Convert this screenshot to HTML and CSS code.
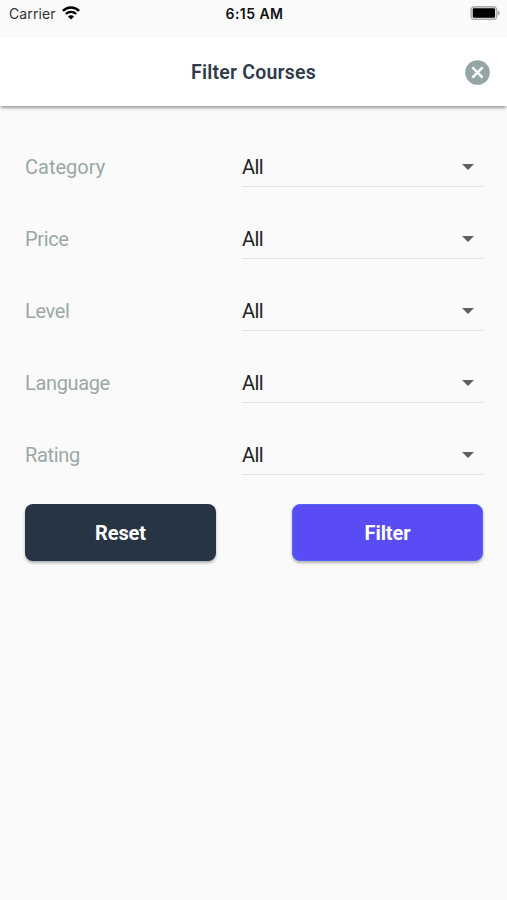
FILE: index.html
```html
<!DOCTYPE html>
<html lang="en">
<head>
    <meta charset="UTF-8">
    <meta name="viewport" content="width=device-width, initial-scale=1.0">
    <title>Filter Courses</title>
    <link rel="stylesheet" href="styles.css">
</head>
<body>
    <div class="status-bar">
        <div class="status-left">
            <span class="carrier">Carrier</span>
            <svg class="wifi" width="18" height="14" viewBox="0 0 18 14">
                <path d="M0.9 4.9C5.4 0.3 12.6 0.3 17.1 4.9" fill="none" stroke="#000" stroke-width="2.5"/>
                <path d="M3.8 8C6.7 5.2 11.3 5.2 14.2 8" fill="none" stroke="#000" stroke-width="2.3"/>
                <path d="M9 13.6L5.9 10.4C7.6 8.9 10.4 8.9 12.1 10.4Z"/>
            </svg>
        </div>
        <span class="time">6:15 AM</span>
        <svg class="battery" width="30" height="14" viewBox="0 0 30 14">
            <rect x="1" y="0.7" width="25.8" height="12.8" rx="3.6" fill="#ddd" stroke="#aaa" stroke-width="1.4"/>
            <rect x="2.8" y="2.2" width="22.2" height="9.6" rx="1.4"/>
            <path d="M27.8 4.5C30.4 5.6 30.4 8.4 27.8 9.5Z" fill="#aaa"/>
        </svg>
    </div>

    <header class="header">
        <h1>Filter Courses</h1>
        <button class="close" aria-label="Close">
            <svg width="25" height="25" viewBox="0 0 25 25">
                <circle cx="12.5" cy="12.5" r="12.3" fill="#95a5a6"/>
                <path d="M7.4 7.4L17.6 17.6M17.6 7.4L7.4 17.6" stroke="#fff" stroke-width="2.5"/>
            </svg>
        </button>
    </header>

    <main class="filters">
        <div class="row">
            <label for="category">Category</label>
            <div class="select">
                <select id="category"><option>All</option></select>
                <svg class="arrow" width="12" height="6" viewBox="0 0 12 6"><path d="M0 0H12L6 6Z"/></svg>
            </div>
        </div>
        <div class="row">
            <label for="price">Price</label>
            <div class="select">
                <select id="price"><option>All</option></select>
                <svg class="arrow" width="12" height="6" viewBox="0 0 12 6"><path d="M0 0H12L6 6Z"/></svg>
            </div>
        </div>
        <div class="row">
            <label for="level">Level</label>
            <div class="select">
                <select id="level"><option>All</option></select>
                <svg class="arrow" width="12" height="6" viewBox="0 0 12 6"><path d="M0 0H12L6 6Z"/></svg>
            </div>
        </div>
        <div class="row">
            <label for="language">Language</label>
            <div class="select">
                <select id="language"><option>All</option></select>
                <svg class="arrow" width="12" height="6" viewBox="0 0 12 6"><path d="M0 0H12L6 6Z"/></svg>
            </div>
        </div>
        <div class="row">
            <label for="rating">Rating</label>
            <div class="select">
                <select id="rating"><option>All</option></select>
                <svg class="arrow" width="12" height="6" viewBox="0 0 12 6"><path d="M0 0H12L6 6Z"/></svg>
            </div>
        </div>

        <div class="buttons">
            <button class="btn btn-reset">Reset</button>
            <button class="btn btn-filter">Filter</button>
        </div>
    </main>
</body>
</html>
```

FILE: styles.css
```css
* {
    box-sizing: border-box;
}

body {
    margin: 0;
    min-height: 100vh;
    background: #fafafa;
    font-family: Roboto, "Liberation Sans", sans-serif;
    font-size: 20px;
}

button {
    border: none;
    padding: 0;
    font-family: inherit;
    cursor: pointer;
}

/* Status bar */
.status-bar {
    display: grid;
    grid-template-columns: 1fr auto 1fr;
    align-items: center;
    height: 38px;
    padding: 0 7px 12px 9px;
    font-family: Inter, "Liberation Sans", sans-serif;
    font-size: 14px;
    color: #111;
}

.status-left {
    display: flex;
    align-items: center;
    gap: 6px;
}

.carrier {
    color: #333;
    letter-spacing: 0.1px;
}

.time {
    font-weight: 600;
    letter-spacing: 0.45px;
}

.battery {
    justify-self: end;
}

/* Header */
.header {
    display: grid;
    grid-template-columns: 1fr auto 1fr;
    align-items: center;
    height: 68px;
    padding: 0 17px;
    background: #fff;
    box-shadow: 0 3px 3px -1px rgba(0, 0, 0, 0.38);
}

.header h1 {
    grid-column: 2;
    margin: 0;
    font-size: 19.5px;
    font-weight: 600;
    letter-spacing: 0.2px;
    color: #2f3a4b;
}

.close {
    display: flex;
    justify-self: end;
    background: none;
}

/* Filters */
.filters {
    padding: 25px 24px 0 25px;
}

.row {
    display: grid;
    grid-template-columns: 217px 1fr;
    height: 72px;
    padding-top: 16px;
}

.row label {
    line-height: 40px;
    letter-spacing: -0.35px;
    color: #9aa8a7;
}

.row label[for="category"] {
    letter-spacing: 0;
}

.select {
    display: flex;
    align-items: center;
    height: 40px;
    padding-right: 9px;
    border-bottom: 1px solid #e3e3e3;
}

.select select {
    flex: 1;
    appearance: none;
    border: none;
    padding: 0;
    background: none;
    font: inherit;
    letter-spacing: -0.6px;
    color: #222;
}

.arrow {
    fill: #616161;
}

/* Buttons */
.buttons {
    display: flex;
    justify-content: space-between;
    padding-top: 13px;
}

.btn {
    width: 191px;
    height: 57px;
    border-radius: 8px;
    font-size: 20px;
    font-weight: 700;
    letter-spacing: -0.1px;
    color: #fff;
    box-shadow: 0 2px 3px rgba(0, 0, 0, 0.3);
}

.btn-reset {
    background: #273444;
}

.btn-filter {
    background: #594cf5;
    border: 1px solid #4f63f5;
}
```
